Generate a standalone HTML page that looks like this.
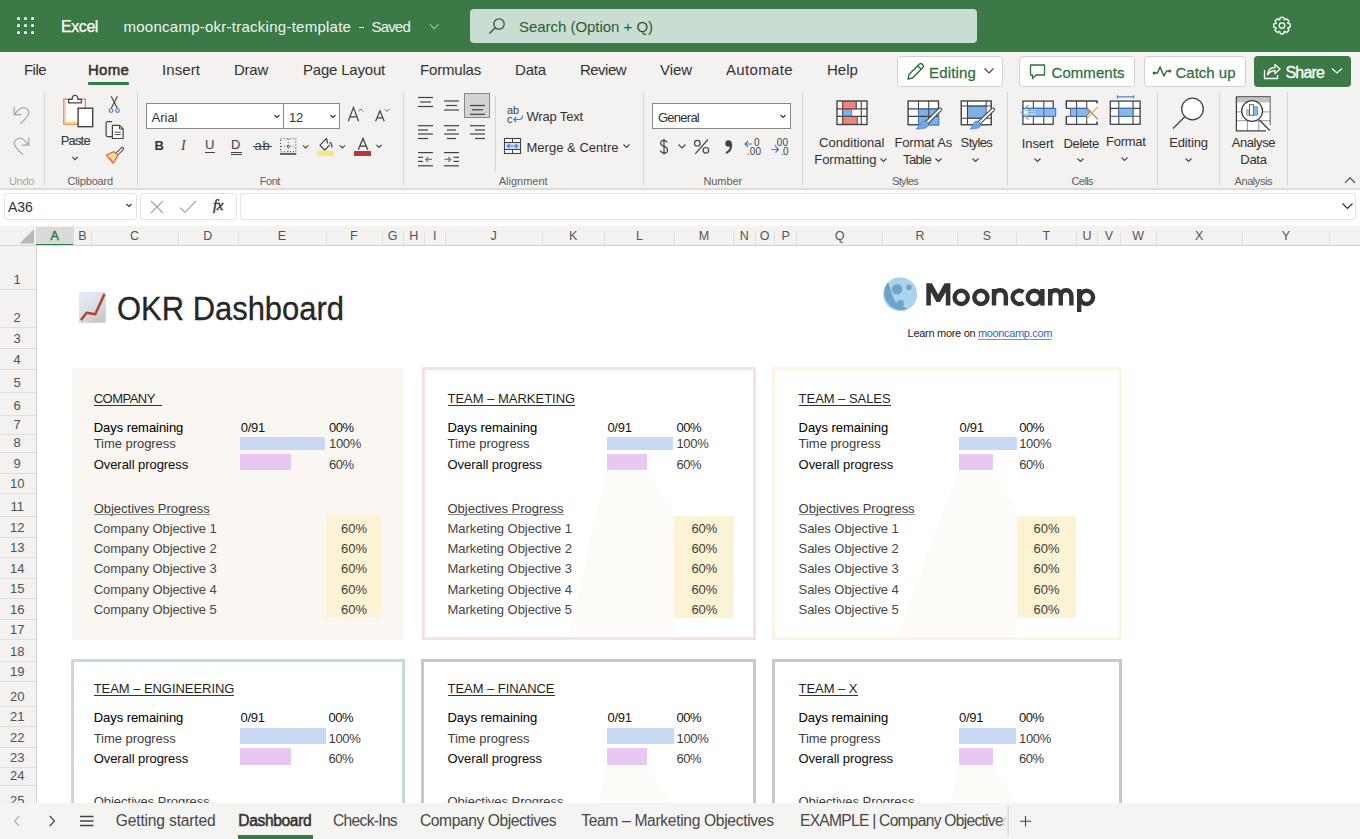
<!DOCTYPE html><html><head><meta charset="utf-8"><style>
html,body{margin:0;padding:0;width:1360px;height:839px;overflow:hidden;background:#fff}
body{position:relative;font-family:"Liberation Sans",sans-serif}
.a{position:absolute}
.t{position:absolute;white-space:pre;line-height:1}
svg{overflow:visible}
</style></head><body>
<div class="a" style="left:0px;top:0px;width:1360px;height:52px;background:#3b7a47"></div>
<div class="a" style="left:17px;top:17px;width:3px;height:3px;border-radius:50%;background:#fff"></div>
<div class="a" style="left:17px;top:24px;width:3px;height:3px;border-radius:50%;background:#fff"></div>
<div class="a" style="left:17px;top:31px;width:3px;height:3px;border-radius:50%;background:#fff"></div>
<div class="a" style="left:24px;top:17px;width:3px;height:3px;border-radius:50%;background:#fff"></div>
<div class="a" style="left:24px;top:24px;width:3px;height:3px;border-radius:50%;background:#fff"></div>
<div class="a" style="left:24px;top:31px;width:3px;height:3px;border-radius:50%;background:#fff"></div>
<div class="a" style="left:31px;top:17px;width:3px;height:3px;border-radius:50%;background:#fff"></div>
<div class="a" style="left:31px;top:24px;width:3px;height:3px;border-radius:50%;background:#fff"></div>
<div class="a" style="left:31px;top:31px;width:3px;height:3px;border-radius:50%;background:#fff"></div>
<div class="t " style="left:61.0px;top:19.4px;font-size:16px;color:#ffffff;letter-spacing:-0.425px;-webkit-text-stroke:0.25px #fff">Excel</div>
<div class="t " style="left:123.5px;top:18.9px;font-size:15px;color:#eef4ef;letter-spacing:0.254px;">mooncamp-okr-tracking-template</div>
<div class="a" style="left:358.7px;top:27px;width:5.3px;height:1.2px;background:#eef4ef"></div>
<div class="t " style="left:371.5px;top:18.9px;font-size:15px;color:#eef4ef;letter-spacing:-0.827px;">Saved</div>
<svg class="a" style="left:429px;top:23px;" width="11" height="8" viewBox="0 0 11 8" fill="none"><path d="M1 1.2 L5 5.8 L9.5 1.2" stroke="#cfe0d3" stroke-width="1"/></svg>
<div class="a" style="left:470px;top:9px;width:507px;height:34px;background:#c9ddd0;border-radius:4px"></div>
<svg class="a" style="left:487px;top:16px;" width="20" height="20" viewBox="0 0 20 20" fill="none"><circle cx="12" cy="8" r="5.2" stroke="#2f5a3a" stroke-width="1.3"/><path d="M8.3 11.7 L2.5 17.5" stroke="#2f5a3a" stroke-width="1.4"/></svg>
<div class="t " style="left:519.0px;top:19.2px;font-size:15px;color:#2f5a3a;letter-spacing:-0.034px;">Search (Option + Q)</div>
<svg class="a" style="left:0;top:0" width="1360" height="839"><path d="M1279.78 19.70 L1280.35 17.47 L1283.65 17.47 L1284.22 19.70 L1284.60 19.86 L1286.59 18.68 L1288.92 21.01 L1287.74 23.00 L1287.90 23.38 L1290.13 23.95 L1290.13 27.25 L1287.90 27.82 L1287.74 28.20 L1288.92 30.19 L1286.59 32.52 L1284.60 31.34 L1284.22 31.50 L1283.65 33.73 L1280.35 33.73 L1279.78 31.50 L1279.40 31.34 L1277.41 32.52 L1275.08 30.19 L1276.26 28.20 L1276.10 27.82 L1273.87 27.25 L1273.87 23.95 L1276.10 23.38 L1276.26 23.00 L1275.08 21.01 L1277.41 18.68 L1279.40 19.86 Z" stroke="#fff" stroke-width="1.3" stroke-linejoin="round" fill="none"/><circle cx="1282" cy="25.6" r="2.8" stroke="#fff" stroke-width="1.3" fill="none"/></svg>
<div class="a" style="left:0px;top:52px;width:1360px;height:137px;background:#f3f2f1"></div>
<div class="t " style="left:24.0px;top:62.2px;font-size:15px;color:#323130;letter-spacing:-0.543px;">File</div>
<div class="t " style="left:88.0px;top:62.2px;font-size:15px;color:#323130;letter-spacing:0.247px;-webkit-text-stroke:0.5px #323130">Home</div>
<div class="t " style="left:162.0px;top:62.2px;font-size:15px;color:#323130;letter-spacing:0.081px;">Insert</div>
<div class="t " style="left:234.0px;top:62.2px;font-size:15px;color:#323130;letter-spacing:-0.251px;">Draw</div>
<div class="t " style="left:303.0px;top:62.2px;font-size:15px;color:#323130;letter-spacing:-0.203px;">Page Layout</div>
<div class="t " style="left:420.0px;top:62.2px;font-size:15px;color:#323130;letter-spacing:-0.189px;">Formulas</div>
<div class="t " style="left:515.0px;top:62.2px;font-size:15px;color:#323130;letter-spacing:-0.171px;">Data</div>
<div class="t " style="left:580.0px;top:62.2px;font-size:15px;color:#323130;letter-spacing:-0.531px;">Review</div>
<div class="t " style="left:660.0px;top:62.2px;font-size:15px;color:#323130;letter-spacing:-0.061px;">View</div>
<div class="t " style="left:726.0px;top:62.2px;font-size:15px;color:#323130;letter-spacing:0.349px;">Automate</div>
<div class="t " style="left:827.0px;top:62.2px;font-size:15px;color:#323130;letter-spacing:0.037px;">Help</div>
<div class="a" style="left:88px;top:82px;width:41px;height:3px;background:#2e7d46;border-radius:1px"></div>
<div class="a" style="left:897px;top:56px;width:106px;height:31px;background:#fff;border:1px solid #d2d0ce;border-radius:4px;box-sizing:border-box"></div>
<svg class="a" style="left:905px;top:62px;" width="20" height="20" viewBox="0 0 20 20" fill="none"><path d="M3 17 L4 12.5 L14.5 2 a1.8 1.8 0 0 1 2.5 0 l.9 .9 a1.8 1.8 0 0 1 0 2.5 L7.5 16 Z M12.8 3.8 L16.2 7.2" stroke="#2e6e3d" stroke-width="1.4" stroke-linejoin="round"/></svg>
<div class="t " style="left:929.0px;top:65.2px;font-size:15px;color:#337242;letter-spacing:0.162px;-webkit-text-stroke:0.3px #337242">Editing</div>
<svg class="a" style="left:983px;top:67px;" width="12" height="8" viewBox="0 0 12 8" fill="none"><path d="M1.5 1.5 L6 6 L10.5 1.5" stroke="#444" stroke-width="1.1"/></svg>
<div class="a" style="left:1019px;top:56px;width:116px;height:31px;background:#fff;border:1px solid #d2d0ce;border-radius:4px;box-sizing:border-box"></div>
<svg class="a" style="left:1029px;top:63px;" width="18" height="18" viewBox="0 0 18 18" fill="none"><path d="M1.5 2 H15.5 V12 H7 L3.5 15.5 V12 H1.5 Z" stroke="#2e6e3d" stroke-width="1.3" stroke-linejoin="round"/></svg>
<div class="t " style="left:1051.5px;top:65.2px;font-size:15px;color:#337242;letter-spacing:0.060px;-webkit-text-stroke:0.3px #337242">Comments</div>
<div class="a" style="left:1144px;top:56px;width:102px;height:31px;background:#fff;border:1px solid #d2d0ce;border-radius:4px;box-sizing:border-box"></div>
<svg class="a" style="left:1152px;top:63px;" width="20" height="16" viewBox="0 0 20 16" fill="none"><path d="M2 10 L5.5 10 L8 4 L12 13 L14.5 8 L18 8" stroke="#2e6e3d" stroke-width="1.5" stroke-linejoin="round" stroke-linecap="round"/><circle cx="2.2" cy="10" r="1.6" fill="#2e6e3d"/><circle cx="17.8" cy="8" r="1.6" fill="#2e6e3d"/></svg>
<div class="t " style="left:1175.5px;top:65.2px;font-size:15px;color:#337242;letter-spacing:-0.005px;-webkit-text-stroke:0.3px #337242">Catch up</div>
<div class="a" style="left:1254px;top:56px;width:97px;height:31px;background:#3b7a47;border-radius:4px"></div>
<svg class="a" style="left:1262px;top:61px;" width="20" height="20" viewBox="0 0 20 20" fill="none"><path d="M2.5 9 V17.5 H15.5 V14" stroke="#fff" stroke-width="1.3"/><path d="M5.5 14 C6 9 9 6.5 13 6.5 V3.5 L18 8 L13 12.5 V9.5 C10 9.5 7.5 11 5.5 14 Z" stroke="#fff" stroke-width="1.3" stroke-linejoin="round"/></svg>
<div class="t " style="left:1285.5px;top:64.9px;font-size:16px;color:#fff;letter-spacing:-0.839px;-webkit-text-stroke:0.3px #fff">Share</div>
<svg class="a" style="left:1331px;top:67px;" width="12" height="8" viewBox="0 0 12 8" fill="none"><path d="M1 1.5 L6 6 L11 1.5" stroke="#fff" stroke-width="1.1"/></svg>
<div class="a" style="left:44px;top:92px;width:1px;height:93px;background:#d6d4d2"></div>
<div class="a" style="left:137px;top:92px;width:1px;height:93px;background:#d6d4d2"></div>
<div class="a" style="left:403px;top:92px;width:1px;height:93px;background:#d6d4d2"></div>
<div class="a" style="left:643px;top:92px;width:1px;height:93px;background:#d6d4d2"></div>
<div class="a" style="left:802px;top:92px;width:1px;height:93px;background:#d6d4d2"></div>
<div class="a" style="left:1007px;top:92px;width:1px;height:93px;background:#d6d4d2"></div>
<div class="a" style="left:1157px;top:92px;width:1px;height:93px;background:#d6d4d2"></div>
<div class="a" style="left:1219px;top:92px;width:1px;height:93px;background:#d6d4d2"></div>
<div class="a" style="left:1287px;top:92px;width:1px;height:93px;background:#d6d4d2"></div>
<div class="a" style="left:495px;top:96px;width:1px;height:75px;background:#d6d4d2"></div>
<div class="a" style="left:0px;top:188px;width:1360px;height:2px;background:#dedcda"></div>
<div class="t " style="left:9.0px;top:175.7px;font-size:11px;color:#a8a6a4;letter-spacing:-0.324px;">Undo</div>
<div class="t " style="left:67.4px;top:175.7px;font-size:11px;color:#605e5c;letter-spacing:-0.165px;">Clipboard</div>
<div class="t " style="left:259.7px;top:175.7px;font-size:11px;color:#605e5c;letter-spacing:-0.428px;">Font</div>
<div class="t " style="left:498.7px;top:175.7px;font-size:11px;color:#605e5c;letter-spacing:0.009px;">Alignment</div>
<div class="t " style="left:703.5px;top:175.7px;font-size:11px;color:#605e5c;letter-spacing:-0.104px;">Number</div>
<div class="t " style="left:892.0px;top:175.7px;font-size:11px;color:#605e5c;letter-spacing:-0.659px;">Styles</div>
<div class="t " style="left:1071.5px;top:175.7px;font-size:11px;color:#605e5c;letter-spacing:-0.590px;">Cells</div>
<div class="t " style="left:1234.6px;top:175.7px;font-size:11px;color:#605e5c;letter-spacing:-0.445px;">Analysis</div>
<svg class="a" style="left:0;top:0" width="1360" height="839"><g stroke="#a8a6a4" stroke-width="1.25" fill="none"><path d="M14.2 106.7 V114.6 H21.3"/><path d="M14.6 114.2 C17.5 110.5 20.5 107.5 23.3 107.5 C26.5 107.5 28.8 110 28.8 113 C28.8 115.5 27 117.5 20.5 123.8"/><path d="M28.8 137.6 V145.1 H21.7"/><path d="M28.4 144.7 C25.5 141 22.8 138 20.2 138 C17 138 14.2 140.5 14.2 143.5 C14.2 146 16 148.5 23 154.7"/></g></svg>
<svg class="a" style="left:0;top:0" width="1360" height="839"><rect x="63.8" y="99.2" width="21.5" height="25" fill="#fff" stroke="#e8806f" stroke-width="1.3"/><path d="M65.6 100.5 V122.6 H84" stroke="#f5d84a" stroke-width="1" fill="none"/><path d="M68.6 102.8 V99.4 H72.2 C72.2 97 73.4 95.4 75 95.4 C76.6 95.4 77.8 97 77.8 99.4 H81.4 V102.8 Z" fill="#fff" stroke="#424242" stroke-width="1.2" stroke-linejoin="round"/><rect x="78.1" y="108.2" width="14.6" height="18.5" fill="#fff" stroke="#424242" stroke-width="1.4"/><path d="M111.2 96.2 L117.6 108.8 M117.4 96.2 L111 108.8" stroke="#424242" stroke-width="1.1"/><circle cx="111" cy="110.6" r="1.8" stroke="#3d7ad6" stroke-width="1.1" fill="#fff"/><circle cx="117.5" cy="110.6" r="1.8" stroke="#3d7ad6" stroke-width="1.1" fill="#fff"/><path d="M112.2 121.6 H107.6 C106.7 121.6 106.1 122.2 106.1 123.1 V135.1 C106.1 136 106.7 136.6 107.6 136.6 H112.2" stroke="#424242" stroke-width="1.2" fill="none"/><path d="M112.4 125.4 H119.5 L123.1 129 V138.5 H112.4 Z" fill="#fff" stroke="#424242" stroke-width="1.2" stroke-linejoin="round"/><path d="M119.5 125.4 V129 H123.1" stroke="#424242" stroke-width="1" fill="none"/><path d="M114.6 132.2 H120.8 M114.6 134.6 H120.8" stroke="#424242" stroke-width="0.9"/><path d="M122.3 148.7 L116.4 154.6" stroke="#424242" stroke-width="3.6" stroke-linecap="round"/><path d="M122.3 148.7 L116.4 154.6" stroke="#fff" stroke-width="1.5" stroke-linecap="round"/><path d="M106.2 155.2 L114 151.6 L117.8 155.6 L113.3 163.3 Z" fill="#fbe38a" stroke="#e0604f" stroke-width="1.2" stroke-linejoin="round"/><path d="M109.5 157.5 L112.5 161" stroke="#e0604f" stroke-width="0.9"/><path d="M72.4 157 L75 159.6 L77.6 157" stroke="#444" stroke-width="1.1" fill="none"/></svg>
<div class="t " style="left:60.7px;top:133.8px;font-size:13px;color:#3b3a39;letter-spacing:-0.829px;-webkit-text-stroke:0.1px #3b3a39">Paste</div>
<div class="a" style="left:146px;top:103px;width:194px;height:26px;background:#fff;border:1px solid #8a8886;box-sizing:border-box"></div>
<div class="a" style="left:283px;top:104px;width:1px;height:24px;background:#8a8886"></div>
<div class="t " style="left:151.5px;top:111.0px;font-size:13px;color:#323130;letter-spacing:-0.002px;">Arial</div>
<svg class="a" style="left:272px;top:113px;" width="10" height="7" viewBox="0 0 10 7" fill="none"><path d="M2.5 2 L5 4.5 L7.5 2" stroke="#333" stroke-width="1.1"/></svg>
<div class="t " style="left:289.0px;top:111.0px;font-size:13px;color:#323130;letter-spacing:-0.230px;">12</div>
<svg class="a" style="left:328px;top:113px;" width="10" height="7" viewBox="0 0 10 7" fill="none"><path d="M2.5 2 L5 4.5 L7.5 2" stroke="#333" stroke-width="1.1"/></svg>
<svg class="a" style="left:0;top:0" width="1360" height="839"><path d="M348.3 121.3 L353.45000000000005 107.4 L358.6 121.3 M349.95 116.85 H356.95" stroke="#424242" stroke-width="1.2" fill="none"/><path d="M358.3 111.5 L360.8 108.9 L363.3 111.5" stroke="#3d7ad6" stroke-width="1" fill="none"/><path d="M375.6 121.3 L379.9 110.8 L384.2 121.3 M376.98 117.94 H382.82" stroke="#424242" stroke-width="1.2" fill="none"/><path d="M384.6 108.9 L387.1 111.5 L389.6 108.9" stroke="#3d7ad6" stroke-width="1" fill="none"/></svg>
<div class="t " style="left:154.5px;top:139.4px;font-size:13px;color:#333;font-weight:bold;letter-spacing:-0.388px;">B</div>
<div class="t" style="left:181px;top:139px;font-size:14px;font-family:'Liberation Serif';font-style:italic;color:#424242">I</div>
<div class="t " style="left:205.0px;top:138.4px;font-size:13px;color:#424242;letter-spacing:0.612px;">U</div>
<div class="a" style="left:205px;top:152px;width:10px;height:1px;background:#424242"></div>
<div class="t " style="left:231.0px;top:138.4px;font-size:13px;color:#424242;letter-spacing:1.112px;">D</div>
<div class="a" style="left:231px;top:151.5px;width:11px;height:1px;background:#424242"></div>
<div class="a" style="left:231px;top:154px;width:11px;height:1px;background:#424242"></div>
<div class="t " style="left:254.5px;top:138.9px;font-size:13px;color:#424242;letter-spacing:0.770px;">ab</div>
<div class="a" style="left:253px;top:146px;width:19px;height:1px;background:#424242"></div>
<svg class="a" style="left:0;top:0" width="1360" height="839"><rect x="280.6" y="138.7" width="15.2" height="13" stroke="#424242" stroke-width="1.1" stroke-dasharray="1.1 1.9" fill="none"/><path d="M288.3 139 V151.5 M281 146.3 H295.5" stroke="#6a6a6a" stroke-width="1" stroke-dasharray="1 1.9"/><circle cx="288.3" cy="146.3" r="1.1" stroke="#424242" stroke-width="0.8" fill="none"/><path d="M280 154 H296.3" stroke="#424242" stroke-width="1.6"/></svg>
<svg class="a" style="left:0;top:0" width="1360" height="839"><path d="M327.6 143.5 L326.5 138.4 L320 145.4 L324.7 150 L329.8 144.9" stroke="#424242" stroke-width="1.2" fill="#fff" stroke-linejoin="round"/><path d="M329.3 142.6 C331.5 142.3 332.3 145 331.6 147.6" stroke="#3d6fc0" stroke-width="1.6" fill="none"/><rect x="317" y="150.8" width="17.2" height="4.9" fill="#f6e97a"/><path d="M303 145.3 L305.7 148 L308.4 145.3" stroke="#444" stroke-width="1.1" fill="none"/><path d="M339.6 145.3 L342.3 148 L345 145.3" stroke="#444" stroke-width="1.1" fill="none"/></svg>
<svg class="a" style="left:0;top:0" width="1360" height="839"><path d="M358.3 149.7 L363.0 138.5 L367.7 149.7 M359.80 146.12 H366.20" stroke="#424242" stroke-width="1.3" fill="none"/></svg>
<div class="a" style="left:354px;top:151px;width:17px;height:4.5px;background:#b23a32"></div>
<svg class="a" style="left:375px;top:142px;" width="10" height="7" viewBox="0 0 10 7" fill="none"><path d="M1.5 3 L4 5.5 L6.5 3" stroke="#444" stroke-width="1.1"/></svg>
<svg class="a" style="left:416px;top:94px;" width="20" height="16" viewBox="0 0 20 16" fill="none"><path d="M2 3.5 H17" stroke="#424242" stroke-width="1.2"/><path d="M4 8 H15" stroke="#424242" stroke-width="1.2"/><path d="M2 12.5 H17" stroke="#424242" stroke-width="1.2"/></svg>
<svg class="a" style="left:442px;top:97px;" width="20" height="16" viewBox="0 0 20 16" fill="none"><path d="M2 4 H17" stroke="#424242" stroke-width="1.2"/><path d="M4 8.5 H15" stroke="#424242" stroke-width="1.2"/><path d="M2 13 H17" stroke="#424242" stroke-width="1.2"/></svg>
<div class="a" style="left:464px;top:93px;width:26px;height:25px;background:#d5d3d1;border:1px solid #8a8886;box-sizing:border-box"></div>
<svg class="a" style="left:467px;top:100px;" width="20" height="18" viewBox="0 0 20 18" fill="none"><path d="M3 5.5 H18" stroke="#424242" stroke-width="1.2"/><path d="M5 9.8 H16" stroke="#424242" stroke-width="1.2"/><path d="M3 14.3 H18" stroke="#424242" stroke-width="1.2"/></svg>
<svg class="a" style="left:416px;top:122px;" width="20" height="20" viewBox="0 0 20 20" fill="none"><path d="M2 3.7 H17" stroke="#424242" stroke-width="1.2"/><path d="M2 8 H12" stroke="#424242" stroke-width="1.2"/><path d="M2 12 H17" stroke="#424242" stroke-width="1.2"/><path d="M2 16.5 H12" stroke="#424242" stroke-width="1.2"/></svg>
<svg class="a" style="left:442px;top:122px;" width="20" height="20" viewBox="0 0 20 20" fill="none"><path d="M2 3.7 H17" stroke="#424242" stroke-width="1.2"/><path d="M5 8 H14" stroke="#424242" stroke-width="1.2"/><path d="M2 12 H17" stroke="#424242" stroke-width="1.2"/><path d="M5 16.5 H14" stroke="#424242" stroke-width="1.2"/></svg>
<svg class="a" style="left:467px;top:122px;" width="20" height="20" viewBox="0 0 20 20" fill="none"><path d="M3 3.7 H18" stroke="#424242" stroke-width="1.2"/><path d="M8 8 H18" stroke="#424242" stroke-width="1.2"/><path d="M3 12 H18" stroke="#424242" stroke-width="1.2"/><path d="M8 16.5 H18" stroke="#424242" stroke-width="1.2"/></svg>
<svg class="a" style="left:416px;top:150px;" width="20" height="18" viewBox="0 0 20 18" fill="none"><path d="M2 2.6 H17" stroke="#424242" stroke-width="1.2"/><path d="M2 7.3 H7" stroke="#424242" stroke-width="1.2"/><path d="M2 11.4 H7" stroke="#424242" stroke-width="1.2"/><path d="M2 15.8 H17" stroke="#424242" stroke-width="1.2"/><path d="M9.8 9.4 H16 M12.2 7 L9.8 9.4 L12.2 11.8" stroke="#4a86cf" stroke-width="1.3" fill="none"/></svg>
<svg class="a" style="left:442px;top:150px;" width="20" height="18" viewBox="0 0 20 18" fill="none"><path d="M2 2.6 H17" stroke="#424242" stroke-width="1.2"/><path d="M11.5 7.3 H17" stroke="#424242" stroke-width="1.2"/><path d="M11.5 11.4 H17" stroke="#424242" stroke-width="1.2"/><path d="M2 15.8 H17" stroke="#424242" stroke-width="1.2"/><path d="M2.5 9.4 H8.7 M6.3 7 L8.7 9.4 L6.3 11.8" stroke="#4a86cf" stroke-width="1.3" fill="none"/></svg>
<div class="t" style="left:507px;top:106px;font-size:11px;line-height:9px;color:#424242">ab<br>c</div>
<svg class="a" style="left:512px;top:114px;" width="12" height="10" viewBox="0 0 12 10" fill="none"><path d="M2 5.5 H7 C9.5 5.5 10.5 4 10.5 1.5" stroke="#3d7ad6" stroke-width="1.2" fill="none"/><path d="M4.2 3 L1.8 5.5 L4.2 8" stroke="#3d7ad6" stroke-width="1.2" fill="none"/></svg>
<div class="t " style="left:526.5px;top:110.0px;font-size:13px;color:#323130;letter-spacing:-0.172px;">Wrap Text</div>
<svg class="a" style="left:503px;top:137px;" width="19" height="18" viewBox="0 0 19 18" fill="none"><rect x="1.5" y="1.5" width="16" height="15" stroke="#424242" stroke-width="1.1" fill="#fff"/><rect x="2" y="5.5" width="15" height="7" fill="#cfe0f5"/><path d="M1.5 5.5 H17.5 M1.5 12.5 H17.5 M9.5 1.5 V5.5 M9.5 12.5 V16.5" stroke="#424242" stroke-width="1"/><path d="M4.5 9 H14.5 M6.5 7 L4.5 9 L6.5 11 M12.5 7 L14.5 9 L12.5 11" stroke="#3d7ad6" stroke-width="1.1" fill="none"/></svg>
<div class="t " style="left:526.5px;top:140.9px;font-size:13px;color:#323130;letter-spacing:0.017px;">Merge &amp; Centre</div>
<svg class="a" style="left:622px;top:143px;" width="9" height="6" viewBox="0 0 9 6" fill="none"><path d="M1.5 1.5 L4.5 4.5 L7.5 1.5" stroke="#444" stroke-width="1.1"/></svg>
<div class="a" style="left:652px;top:103px;width:139px;height:26px;background:#fff;border:1px solid #8a8886;box-sizing:border-box"></div>
<div class="t " style="left:658.0px;top:111.0px;font-size:13px;color:#323130;letter-spacing:-0.750px;">General</div>
<svg class="a" style="left:778px;top:113px;" width="10" height="7" viewBox="0 0 10 7" fill="none"><path d="M2.5 2 L5 4.5 L7.5 2" stroke="#333" stroke-width="1.1"/></svg>
<svg class="a" style="left:0;top:0" width="1360" height="839"><path d="M667.3 142.6 C666.6 141 665.4 140.3 663.9 140.3 C661.9 140.3 660.7 141.5 660.7 143.2 C660.7 147.2 667.6 145.6 667.6 150 C667.6 151.8 666.2 153.1 664 153.1 C662.3 153.1 661 152.2 660.3 150.6 M664 138.8 V154.8" stroke="#424242" stroke-width="1.2" fill="none"/><circle cx="697.3" cy="143.2" r="2.8" stroke="#424242" stroke-width="1.2" fill="none"/><circle cx="705.9" cy="150.3" r="2.8" stroke="#424242" stroke-width="1.2" fill="none"/><path d="M708 139.5 L695.2 153.8" stroke="#424242" stroke-width="1.2"/></svg>
<svg class="a" style="left:677px;top:143px;" width="10" height="7" viewBox="0 0 10 7" fill="none"><path d="M1.5 1.5 L5 5 L8.5 1.5" stroke="#444" stroke-width="1.1"/></svg>
<svg class="a" style="left:722px;top:138px;" width="12" height="17" viewBox="0 0 12 17" fill="none"><circle cx="6.5" cy="5.5" r="3.2" fill="#424242"/><path d="M9 6 C9.5 10 7.5 13.5 4 15" stroke="#424242" stroke-width="2.2" fill="none"/></svg>
<svg class="a" style="left:743px;top:137px;" width="20" height="19" viewBox="0 0 20 19" fill="none"><path d="M2 7 H9 M5 4 L2 7 L5 10" stroke="#3d7ad6" stroke-width="1.2" fill="none"/></svg>
<div class="t " style="left:754.0px;top:137.5px;font-size:10px;color:#424242;letter-spacing:0.438px;">0</div>
<div class="t " style="left:747.0px;top:146.5px;font-size:10px;color:#424242;letter-spacing:0.033px;">.00</div>
<svg class="a" style="left:770px;top:137px;" width="20" height="19" viewBox="0 0 20 19" fill="none"><path d="M1.5 12.5 H8.5 M5.5 9.5 L8.5 12.5 L5.5 15.5" stroke="#3d7ad6" stroke-width="1.2" fill="none"/></svg>
<div class="t " style="left:774.0px;top:137.5px;font-size:10px;color:#424242;letter-spacing:0.033px;">.00</div>
<div class="t " style="left:781.0px;top:146.5px;font-size:10px;color:#424242;letter-spacing:-0.670px;">.0</div>
<svg class="a" style="left:834px;top:99px;" width="36" height="30" viewBox="0 0 36 30" fill="none"><rect x="3" y="2" width="30" height="23.5" fill="#fff"/>
<rect x="8.5" y="2" width="13.75" height="7.9" fill="#e8877c"/>
<rect x="8.5" y="17.4" width="15" height="8.1" fill="#e8877c"/>
<rect x="8.5" y="9.9" width="9.4" height="7.5" fill="#7fb0e8"/>
<path d="M3 9.9 H33 M3 17.4 H33 M8.5 2 V25.5 M27.25 2 V25.5 M22.25 2 V9.9" stroke="#424242" stroke-width="1.1"/>
<path d="M8.8 2.3 V9.6 H22" stroke="#c0413a" stroke-width="1.1" fill="none"/><path d="M8.8 17.7 V25.2 M23.3 17.7 V25.2" stroke="#c0413a" stroke-width="1.1" fill="none"/>
<path d="M9 10.4 H17.6 V16.9 H9 Z" stroke="#4a86cf" stroke-width="0.9" fill="none"/>
<rect x="3" y="2" width="30" height="23.5" fill="none" stroke="#424242" stroke-width="1.4"/></svg>
<svg class="a" style="left:905px;top:99px;" width="40" height="34" viewBox="0 0 40 34" fill="none"><rect x="3.1" y="2" width="30.4" height="23.75" fill="#fff" stroke="#424242" stroke-width="1.4"/>
<rect x="13.5" y="9.9" width="20" height="15.85" fill="#7fb0e8"/>
<path d="M3.1 9.9 H33.5 M3.1 17.4 H33.5 M13.5 2 V25.75 M23.75 2 V25.75" stroke="#424242" stroke-width="1.1"/>
<path d="M13.5 9.9 H33.5 V25.75 H13.5 Z" stroke="#4a86cf" stroke-width="0.8" fill="none"/><path d="M35 10.5 L21 24.5" stroke="#424242" stroke-width="4" stroke-linecap="round"/><path d="M35 10.5 L21 24.5" stroke="#fff" stroke-width="1.9" stroke-linecap="round"/><path d="M22.5 23.5 C24 25.5 23.5 28.0 20.5 29.0 C18 29.8 13 30 11 30 C13 28.5 16 23.5 17.5 22.5 C19 21.5 21 22.0 22.5 23.5 Z" fill="#6ea6e6" stroke="#3d6fb0" stroke-width="0.6"/></svg>
<svg class="a" style="left:959px;top:99px;" width="40" height="34" viewBox="0 0 40 34" fill="none"><rect x="2.25" y="2" width="30" height="23.75" fill="#fff" stroke="#424242" stroke-width="1.4"/>
<rect x="8.5" y="7" width="18.75" height="12.25" fill="#7fb0e8" stroke="#3d6fb0" stroke-width="1"/>
<path d="M2.25 7 H32.25 M2.25 19.25 H32.25 M8.5 2 V25.75 M27.25 2 V7" stroke="#424242" stroke-width="1.1"/><path d="M34 10.5 L19.5 24.5" stroke="#424242" stroke-width="4" stroke-linecap="round"/><path d="M34 10.5 L19.5 24.5" stroke="#fff" stroke-width="1.9" stroke-linecap="round"/><path d="M21.0 23.5 C22.5 25.5 22.0 28.0 19.0 29.0 C16.5 29.8 13 30 11 30 C13 28.5 14.5 23.5 16.0 22.5 C17.5 21.5 19.5 22.0 21.0 23.5 Z" fill="#6ea6e6" stroke="#3d6fb0" stroke-width="0.6"/></svg>
<div class="t " style="left:819.0px;top:135.6px;font-size:13px;color:#323130;letter-spacing:0.032px;">Conditional</div>
<div class="t " style="left:814.2px;top:152.6px;font-size:13px;color:#323130;letter-spacing:0.007px;">Formatting</div>
<svg class="a" style="left:879px;top:157px;" width="9" height="6" viewBox="0 0 9 6" fill="none"><path d="M1.5 1.5 L4.5 4.5 L7.5 1.5" stroke="#444" stroke-width="1.1"/></svg>
<div class="t " style="left:894.5px;top:135.6px;font-size:13px;color:#323130;letter-spacing:-0.193px;">Format As</div>
<div class="t " style="left:903.0px;top:152.6px;font-size:13px;color:#323130;letter-spacing:-0.616px;">Table</div>
<svg class="a" style="left:934px;top:157px;" width="9" height="6" viewBox="0 0 9 6" fill="none"><path d="M1.5 1.5 L4.5 4.5 L7.5 1.5" stroke="#444" stroke-width="1.1"/></svg>
<div class="t " style="left:960.6px;top:135.6px;font-size:13px;color:#323130;letter-spacing:-0.634px;">Styles</div>
<svg class="a" style="left:971px;top:157px;" width="9" height="6" viewBox="0 0 9 6" fill="none"><path d="M1.5 1.5 L4.5 4.5 L7.5 1.5" stroke="#444" stroke-width="1.1"/></svg>
<svg class="a" style="left:1019px;top:98px;" width="40" height="30" viewBox="0 0 40 30" fill="none"><rect x="3.9" y="3.1" width="30.3" height="23.2" fill="#fff" stroke="#424242" stroke-width="1.3"/>
<path d="M3.9 10.4 H34.2 M3.9 18.3 H34.2 M14.4 3.1 V26.3 M24.8 3.1 V26.3" stroke="#424242" stroke-width="1.1"/>
<rect x="9.9" y="10.4" width="26.8" height="7.9" fill="#8bb8ea" stroke="#3d6fb0" stroke-width="1"/>
<path d="M24.8 10.4 V18.3" stroke="#3d6fb0" stroke-width="1"/>
<path d="M17 12.6 H6.5 M17 16.1 H6.5" stroke="#eef5fd" stroke-width="1.6"/>
<path d="M9.5 7 L2.3 14.3 L9.5 21.5" stroke="#6ea6e6" stroke-width="1.4" fill="none"/>
<path d="M17.5 12.6 H6 M17.5 16.1 H6" stroke="#6ea6e6" stroke-width="0.9"/></svg>
<svg class="a" style="left:1064px;top:98px;" width="40" height="30" viewBox="0 0 40 30" fill="none"><path d="M2.4 10.4 V3.1 H32.9 V5 M2.4 18.3 V26.3 H32.9 V24" stroke="#424242" stroke-width="1.3" fill="#fff"/>
<rect x="2.4" y="3.1" width="30.5" height="7.3" fill="#fff"/><rect x="2.4" y="18.3" width="30.5" height="8" fill="#fff"/>
<path d="M2.4 10.4 V3.1 H32.9 V5.5 M2.4 18.3 V26.3 H32.9 V23.5" stroke="#424242" stroke-width="1.3" fill="none"/>
<path d="M2.4 10.4 H22.7 M2.4 18.3 H22.7 M12.6 3.1 V26.3 M22.7 3.1 V10.4 M22.7 18.3 V26.3" stroke="#424242" stroke-width="1.1"/>
<path d="M6.6 10.4 H22 L25.6 14.35 L22 18.3 H6.6 Z" fill="#8bb8ea" stroke="#3d6fb0" stroke-width="1"/>
<path d="M12.6 10.4 V18.3" stroke="#3d6fb0" stroke-width="1"/>
<path d="M22 8.9 L33.9 21.3" stroke="#e0604f" stroke-width="1.1"/><path d="M33.9 8.9 L22 21.3" stroke="#d9b040" stroke-width="1.1"/></svg>
<svg class="a" style="left:1108px;top:94px;" width="36" height="34" viewBox="0 0 36 34" fill="none"><path d="M9.3 2.8 H25.7 M9.3 1.2 V4.4 M25.7 1.2 V4.4" stroke="#4a86cf" stroke-width="1.2"/>
<rect x="2.3" y="7.1" width="29.8" height="23.2" fill="#fff" stroke="#424242" stroke-width="1.3"/>
<path d="M2.3 14.4 H32.1 M2.3 22.3 H32.1 M10.8 7.1 V30.3 M25 7.1 V30.3" stroke="#424242" stroke-width="1.1"/>
<rect x="10.8" y="14.4" width="14.2" height="7.9" fill="#8bb8ea" stroke="#3d6fb0" stroke-width="1"/></svg>
<div class="t " style="left:1021.8px;top:136.5px;font-size:13px;color:#323130;letter-spacing:-0.119px;">Insert</div>
<svg class="a" style="left:1033px;top:157px;" width="9" height="6" viewBox="0 0 9 6" fill="none"><path d="M1.5 1.5 L4.5 4.5 L7.5 1.5" stroke="#444" stroke-width="1.1"/></svg>
<div class="t " style="left:1063.5px;top:136.5px;font-size:13px;color:#323130;letter-spacing:-0.347px;">Delete</div>
<svg class="a" style="left:1076px;top:157px;" width="9" height="6" viewBox="0 0 9 6" fill="none"><path d="M1.5 1.5 L4.5 4.5 L7.5 1.5" stroke="#444" stroke-width="1.1"/></svg>
<div class="t " style="left:1106.0px;top:135.1px;font-size:13px;color:#323130;letter-spacing:-0.262px;">Format</div>
<svg class="a" style="left:1120px;top:156px;" width="9" height="6" viewBox="0 0 9 6" fill="none"><path d="M1.5 1.5 L4.5 4.5 L7.5 1.5" stroke="#444" stroke-width="1.1"/></svg>
<svg class="a" style="left:1170px;top:95px;" width="38" height="36" viewBox="0 0 38 36" fill="none"><circle cx="22.5" cy="14" r="10.8" stroke="#424242" stroke-width="1.3" fill="#fff"/><path d="M15 21.5 L3 33.5" stroke="#424242" stroke-width="1.3"/></svg>
<div class="t " style="left:1169.3px;top:135.6px;font-size:13px;color:#323130;letter-spacing:-0.164px;">Editing</div>
<svg class="a" style="left:1184px;top:157px;" width="9" height="6" viewBox="0 0 9 6" fill="none"><path d="M1.5 1.5 L4.5 4.5 L7.5 1.5" stroke="#444" stroke-width="1.1"/></svg>
<svg class="a" style="left:1233px;top:94px;" width="42" height="42" viewBox="0 0 42 42" fill="none"><rect x="3.4" y="2.6" width="33.8" height="34.3" fill="#fff"/>
<rect x="4" y="3.2" width="32.6" height="5.3" fill="#c4c2c0"/>
<path d="M3.4 17.9 H37.2 M3.4 26.7 H37.2 M14.4 26.7 V36.9 M25.8 26.7 V36.9" stroke="#9a9896" stroke-width="1"/>
<path d="M3.4 2.6 V36.9 H33" stroke="#424242" stroke-width="1.3" fill="none"/><path d="M3.4 2.6 H37.2 V31" stroke="#6a6866" stroke-width="1.1" fill="none"/>
<circle cx="19.1" cy="17" r="10.4" fill="#fff" stroke="#424242" stroke-width="1.3"/>
<path d="M26.3 25.9 L36.8 36.5" stroke="#424242" stroke-width="1.4"/>
<rect x="13.6" y="15.8" width="2.9" height="5.4" fill="#c8c6c4" stroke="#8a8886" stroke-width="0.6"/>
<rect x="16.5" y="10.7" width="4.1" height="10.5" fill="#fff" stroke="#424242" stroke-width="0.8"/>
<rect x="20.6" y="12.8" width="3.9" height="8.4" fill="#8bb8ea" stroke="#3d7ad6" stroke-width="0.7"/></svg>
<div class="t " style="left:1231.8px;top:135.6px;font-size:13px;color:#323130;letter-spacing:-0.436px;">Analyse</div>
<div class="t " style="left:1240.3px;top:152.6px;font-size:13px;color:#323130;letter-spacing:-0.290px;">Data</div>
<svg class="a" style="left:1343px;top:176px;" width="14" height="9" viewBox="0 0 14 9" fill="none"><path d="M2 6.8 L7 1.8 L12 6.8" stroke="#444" stroke-width="1.1" fill="none"/></svg>
<div class="a" style="left:5px;top:194px;width:131px;height:25px;background:#fff;border-radius:2px;box-shadow:0 0 0 1px #e6e4e2"></div>
<div class="t " style="left:8.0px;top:200.1px;font-size:14px;color:#323130;letter-spacing:-0.070px;">A36</div>
<svg class="a" style="left:124px;top:202px;" width="10" height="7" viewBox="0 0 10 7" fill="none"><path d="M2.5 2 L5 4.5 L7.5 2" stroke="#333" stroke-width="1.1"/></svg>
<div class="a" style="left:141px;top:194px;width:95px;height:25px;background:#fff;border-radius:2px;box-shadow:0 0 0 1px #e6e4e2"></div>
<svg class="a" style="left:148px;top:198px;" width="18" height="18" viewBox="0 0 18 18" fill="none"><path d="M3 3 L15 15 M15 3 L3 15" stroke="#a8a6a4" stroke-width="1.1"/></svg>
<svg class="a" style="left:178px;top:198px;" width="20" height="18" viewBox="0 0 20 18" fill="none"><path d="M2 9.5 L7 14.5 L18 3" stroke="#a8a6a4" stroke-width="1.1" fill="none"/></svg>
<div class="t" style="left:213px;top:198px;font-size:15px;font-family:'Liberation Serif';font-style:italic;color:#333;letter-spacing:-0.3px;-webkit-text-stroke:0.4px #333">fx</div>
<div class="a" style="left:241px;top:194px;width:1114px;height:24.5px;background:#fff;border-radius:2px;box-shadow:0 0 0 1px #e6e4e2"></div>
<svg class="a" style="left:1341px;top:202px;" width="14" height="10" viewBox="0 0 14 10" fill="none"><path d="M1.5 1.5 L6.5 6.5 L11.5 1.5" stroke="#333" stroke-width="1.2" fill="none"/></svg>
<div class="a" style="left:0px;top:226px;width:1360px;height:20px;background:#f3f2f1"></div>
<div class="a" style="left:0px;top:245px;width:1360px;height:1px;background:#d4d2d0"></div>
<svg class="a" style="left:18px;top:228px;" width="17" height="17" viewBox="0 0 17 17" fill="none"><path d="M16 1 V15.5 H1.5 Z" fill="#b9b8b6"/></svg>
<div class="a" style="left:36px;top:227px;width:37.5px;height:18px;background:#dcdad8"></div>
<div class="a" style="left:36px;top:243.5px;width:37.5px;height:1.8px;background:#2e7d46"></div>
<div class="t " style="left:50.4px;top:229.9px;font-size:12.5px;color:#2e7d46;-webkit-text-stroke:0.5px #2e7d46">A</div>
<div class="a" style="left:73.0px;top:232px;width:1px;height:13px;background:#e1dfdd"></div>
<div class="t " style="left:78.2px;top:229.9px;font-size:12.5px;color:#555;">B</div>
<div class="a" style="left:91.0px;top:232px;width:1px;height:13px;background:#e1dfdd"></div>
<div class="t " style="left:130.1px;top:229.9px;font-size:12.5px;color:#555;">C</div>
<div class="a" style="left:177.5px;top:232px;width:1px;height:13px;background:#e1dfdd"></div>
<div class="t " style="left:203.3px;top:229.9px;font-size:12.5px;color:#555;">D</div>
<div class="a" style="left:237.5px;top:232px;width:1px;height:13px;background:#e1dfdd"></div>
<div class="t " style="left:277.7px;top:229.9px;font-size:12.5px;color:#555;">E</div>
<div class="a" style="left:325.5px;top:232px;width:1px;height:13px;background:#e1dfdd"></div>
<div class="t " style="left:350.0px;top:229.9px;font-size:12.5px;color:#555;">F</div>
<div class="a" style="left:381.5px;top:232px;width:1px;height:13px;background:#e1dfdd"></div>
<div class="t " style="left:387.8px;top:229.9px;font-size:12.5px;color:#555;">G</div>
<div class="a" style="left:403.2px;top:232px;width:1px;height:13px;background:#e1dfdd"></div>
<div class="t " style="left:409.2px;top:229.9px;font-size:12.5px;color:#555;">H</div>
<div class="a" style="left:423.5px;top:232px;width:1px;height:13px;background:#e1dfdd"></div>
<div class="t " style="left:432.9px;top:229.9px;font-size:12.5px;color:#555;">I</div>
<div class="a" style="left:444.9px;top:232px;width:1px;height:13px;background:#e1dfdd"></div>
<div class="t " style="left:490.6px;top:229.9px;font-size:12.5px;color:#555;">J</div>
<div class="a" style="left:541.9px;top:232px;width:1px;height:13px;background:#e1dfdd"></div>
<div class="t " style="left:569.1px;top:229.9px;font-size:12.5px;color:#555;">K</div>
<div class="a" style="left:604.0px;top:232px;width:1px;height:13px;background:#e1dfdd"></div>
<div class="t " style="left:636.0px;top:229.9px;font-size:12.5px;color:#555;">L</div>
<div class="a" style="left:674.2px;top:232px;width:1px;height:13px;background:#e1dfdd"></div>
<div class="t " style="left:698.8px;top:229.9px;font-size:12.5px;color:#555;">M</div>
<div class="a" style="left:733.3px;top:232px;width:1px;height:13px;background:#e1dfdd"></div>
<div class="t " style="left:739.7px;top:229.9px;font-size:12.5px;color:#555;">N</div>
<div class="a" style="left:754.5px;top:232px;width:1px;height:13px;background:#e1dfdd"></div>
<div class="t " style="left:759.8px;top:229.9px;font-size:12.5px;color:#555;">O</div>
<div class="a" style="left:774.3px;top:232px;width:1px;height:13px;background:#e1dfdd"></div>
<div class="t " style="left:781.5px;top:229.9px;font-size:12.5px;color:#555;">P</div>
<div class="a" style="left:796.3px;top:232px;width:1px;height:13px;background:#e1dfdd"></div>
<div class="t " style="left:834.7px;top:229.9px;font-size:12.5px;color:#555;">Q</div>
<div class="a" style="left:882.2px;top:232px;width:1px;height:13px;background:#e1dfdd"></div>
<div class="t " style="left:915.4px;top:229.9px;font-size:12.5px;color:#555;">R</div>
<div class="a" style="left:957.0px;top:232px;width:1px;height:13px;background:#e1dfdd"></div>
<div class="t " style="left:982.8px;top:229.9px;font-size:12.5px;color:#555;">S</div>
<div class="a" style="left:1016.2px;top:232px;width:1px;height:13px;background:#e1dfdd"></div>
<div class="t " style="left:1042.6px;top:229.9px;font-size:12.5px;color:#555;">T</div>
<div class="a" style="left:1076.0px;top:232px;width:1px;height:13px;background:#e1dfdd"></div>
<div class="t " style="left:1082.4px;top:229.9px;font-size:12.5px;color:#555;">U</div>
<div class="a" style="left:1097.1px;top:232px;width:1px;height:13px;background:#e1dfdd"></div>
<div class="t " style="left:1104.8px;top:229.9px;font-size:12.5px;color:#555;">V</div>
<div class="a" style="left:1120.1px;top:232px;width:1px;height:13px;background:#e1dfdd"></div>
<div class="t " style="left:1132.2px;top:229.9px;font-size:12.5px;color:#555;">W</div>
<div class="a" style="left:1155.5px;top:232px;width:1px;height:13px;background:#e1dfdd"></div>
<div class="t " style="left:1194.9px;top:229.9px;font-size:12.5px;color:#555;">X</div>
<div class="a" style="left:1241.9px;top:232px;width:1px;height:13px;background:#e1dfdd"></div>
<div class="t " style="left:1281.7px;top:229.9px;font-size:12.5px;color:#555;">Y</div>
<div class="a" style="left:1329.2px;top:232px;width:1px;height:13px;background:#e1dfdd"></div>
<div class="t " style="left:1370.9px;top:229.9px;font-size:12.5px;color:#555;">Z</div>
<div class="a" style="left:0px;top:246px;width:36px;height:557px;background:#f3f2f1"></div>
<div class="a" style="left:35.5px;top:246px;width:1px;height:557px;background:#d4d2d0"></div>
<div class="a" style="left:0px;top:288.5px;width:36px;height:1px;background:#e1dfdd"></div>
<div class="t " style="left:13.6px;top:273.1px;font-size:13px;color:#505050;">1</div>
<div class="a" style="left:0px;top:326.5px;width:36px;height:1px;background:#e1dfdd"></div>
<div class="t " style="left:13.6px;top:311.1px;font-size:13px;color:#505050;">2</div>
<div class="a" style="left:0px;top:347.5px;width:36px;height:1px;background:#e1dfdd"></div>
<div class="t " style="left:13.6px;top:332.1px;font-size:13px;color:#505050;">3</div>
<div class="a" style="left:0px;top:368.5px;width:36px;height:1px;background:#e1dfdd"></div>
<div class="t " style="left:13.6px;top:353.1px;font-size:13px;color:#505050;">4</div>
<div class="a" style="left:0px;top:391.5px;width:36px;height:1px;background:#e1dfdd"></div>
<div class="t " style="left:13.6px;top:376.1px;font-size:13px;color:#505050;">5</div>
<div class="a" style="left:0px;top:414.5px;width:36px;height:1px;background:#e1dfdd"></div>
<div class="t " style="left:13.6px;top:399.1px;font-size:13px;color:#505050;">6</div>
<div class="a" style="left:0px;top:433.5px;width:36px;height:1px;background:#e1dfdd"></div>
<div class="t " style="left:13.6px;top:418.1px;font-size:13px;color:#505050;">7</div>
<div class="a" style="left:0px;top:451.5px;width:36px;height:1px;background:#e1dfdd"></div>
<div class="t " style="left:13.6px;top:436.1px;font-size:13px;color:#505050;">8</div>
<div class="a" style="left:0px;top:472.5px;width:36px;height:1px;background:#e1dfdd"></div>
<div class="t " style="left:13.6px;top:457.1px;font-size:13px;color:#505050;">9</div>
<div class="a" style="left:0px;top:492.5px;width:36px;height:1px;background:#e1dfdd"></div>
<div class="t " style="left:10.0px;top:477.1px;font-size:13px;color:#505050;">10</div>
<div class="a" style="left:0px;top:515.5px;width:36px;height:1px;background:#e1dfdd"></div>
<div class="t " style="left:10.5px;top:500.1px;font-size:13px;color:#505050;">11</div>
<div class="a" style="left:0px;top:536.5px;width:36px;height:1px;background:#e1dfdd"></div>
<div class="t " style="left:10.0px;top:521.2px;font-size:13px;color:#505050;">12</div>
<div class="a" style="left:0px;top:556.5px;width:36px;height:1px;background:#e1dfdd"></div>
<div class="t " style="left:10.0px;top:541.2px;font-size:13px;color:#505050;">13</div>
<div class="a" style="left:0px;top:577.5px;width:36px;height:1px;background:#e1dfdd"></div>
<div class="t " style="left:10.0px;top:562.2px;font-size:13px;color:#505050;">14</div>
<div class="a" style="left:0px;top:597.5px;width:36px;height:1px;background:#e1dfdd"></div>
<div class="t " style="left:10.0px;top:582.2px;font-size:13px;color:#505050;">15</div>
<div class="a" style="left:0px;top:618.5px;width:36px;height:1px;background:#e1dfdd"></div>
<div class="t " style="left:10.0px;top:603.2px;font-size:13px;color:#505050;">16</div>
<div class="a" style="left:0px;top:638.5px;width:36px;height:1px;background:#e1dfdd"></div>
<div class="t " style="left:10.0px;top:623.2px;font-size:13px;color:#505050;">17</div>
<div class="a" style="left:0px;top:660.5px;width:36px;height:1px;background:#e1dfdd"></div>
<div class="t " style="left:10.0px;top:645.2px;font-size:13px;color:#505050;">18</div>
<div class="a" style="left:0px;top:680.5px;width:36px;height:1px;background:#e1dfdd"></div>
<div class="t " style="left:10.0px;top:665.2px;font-size:13px;color:#505050;">19</div>
<div class="a" style="left:0px;top:705.5px;width:36px;height:1px;background:#e1dfdd"></div>
<div class="t " style="left:10.0px;top:690.2px;font-size:13px;color:#505050;">20</div>
<div class="a" style="left:0px;top:725.5px;width:36px;height:1px;background:#e1dfdd"></div>
<div class="t " style="left:10.0px;top:710.2px;font-size:13px;color:#505050;">21</div>
<div class="a" style="left:0px;top:746.5px;width:36px;height:1px;background:#e1dfdd"></div>
<div class="t " style="left:10.0px;top:731.2px;font-size:13px;color:#505050;">22</div>
<div class="a" style="left:0px;top:766.5px;width:36px;height:1px;background:#e1dfdd"></div>
<div class="t " style="left:10.0px;top:751.2px;font-size:13px;color:#505050;">23</div>
<div class="a" style="left:0px;top:784.5px;width:36px;height:1px;background:#e1dfdd"></div>
<div class="t " style="left:10.0px;top:769.2px;font-size:13px;color:#505050;">24</div>
<div class="a" style="left:0px;top:809.5px;width:36px;height:1px;background:#e1dfdd"></div>
<div class="t " style="left:10.0px;top:794.2px;font-size:13px;color:#505050;">25</div>
<div class="a" style="left:36.5px;top:246px;width:1323.5px;height:557px;background:#fff"></div>
<svg class="a" style="left:79px;top:292px;" width="28" height="32" viewBox="0 0 28 32" fill="none"><defs><linearGradient id="eg" x1="0" y1="0" x2="0.6" y2="1"><stop offset="0" stop-color="#e6edf5"/><stop offset="0.5" stop-color="#dde2e6"/><stop offset="1" stop-color="#c9caca"/></linearGradient></defs>
<rect x="0" y="0" width="26.8" height="30.8" fill="url(#eg)"/>
<path d="M2 28 L7.7 20.7 L16.3 22.2 L25.4 2.1" stroke="#5a2a22" stroke-width="2.6" fill="none" stroke-linejoin="round" opacity="0.55"/>
<path d="M2 28 L7.7 20.7 L16.3 22.2 L25.4 2.1" stroke="#c43b2a" stroke-width="1.9" fill="none" stroke-linejoin="round"/></svg>
<div class="t " style="left:117.4px;top:292.1px;font-size:33px;color:#262626;transform:scaleX(0.9375);transform-origin:0 0;-webkit-text-stroke:0.3px #262626">OKR Dashboard</div>
<svg class="a" style="left:882px;top:276px;" width="38" height="38" viewBox="0 0 38 38" fill="none"><circle cx="18.2" cy="18.3" r="17" fill="#abd3ee"/>
<path d="M6 6.2 C9.5 14 10 22 15 27.5 L25.4 32.7 A17 17 0 0 1 6 6.2 Z" fill="#6ea4cb"/>
<circle cx="18.3" cy="27.5" r="3.6" fill="#6ea4cb"/>
<circle cx="15.1" cy="13.3" r="5.2" fill="#6ea4cb"/><circle cx="26.9" cy="11.2" r="2.8" fill="#6ea4cb"/></svg>
<svg class="a" style="left:0;top:0" width="1360" height="839" viewBox="0 0 1360 839"><path d="M926.3 305.6 V283.3 H931.8 L938.2 294.6 L944.6 283.3 H950.4 V305.6 H945.8 V292 L940 302.1 H936.4 L930.9 292 V305.6 Z" fill="#333333"/><g stroke="#333333" stroke-width="4.4" fill="none">

<circle cx="961.2" cy="297.35" r="6.6"/>
<circle cx="980.9" cy="297.35" r="6.6"/>
<path d="M994 289 V305.6 M994 297 C994 292.5 996.8 290.2 1000.2 290.2 C1003.6 290.2 1005.8 292.5 1005.8 296.5 V305.6"/>
<path d="M1023.4 292.2 A6.6 6.6 0 1 0 1023.4 302.5"/>
<circle cx="1034.3" cy="297.35" r="6.6"/>
<path d="M1042.4 289 V305.6"/>
<path d="M1050.2 289 V305.6 M1050.2 296.5 C1050.2 292.3 1052.5 290.2 1055.4 290.2 C1058.5 290.2 1060.8 292.3 1060.8 296.5 V305.6 M1060.8 296.5 C1060.8 292.3 1063 290.2 1066.1 290.2 C1069.2 290.2 1071.4 292.3 1071.4 296.5 V305.6"/>
<path d="M1079.2 289 V312"/>
<circle cx="1086.5" cy="297.35" r="6.6"/>
</g></svg>
<div class="t " style="left:907.6px;top:328.1px;font-size:11px;color:#222;letter-spacing:-0.293px;">Learn more on </div>
<div class="t " style="left:978.0px;top:328.1px;font-size:11px;color:#2f65b5;letter-spacing:-0.354px;">mooncamp.com</div>
<div class="a" style="left:978px;top:339px;width:74px;height:1px;background:#8196b8"></div>
<div class="a" style="left:72px;top:368px;width:332px;height:272px;background:#faf7f2;"></div>
<div class="a" style="left:422px;top:367px;width:334px;height:273px;border:3px solid #f4e1e9;box-sizing:border-box;background:#fff;"></div>
<div class="a" style="left:772px;top:367px;width:350px;height:273px;border:3px solid #fdf4e1;box-sizing:border-box;background:#fff;"></div>
<svg class="a" style="left:0;top:0" width="1360" height="839"><path d="M606.5 470.5 H646.5 L675 512 V636 H568 Z" fill="#fdfcf9"/><path d="M958.4 470.7 H991.7 L1016.7 511.5 V636 H897 Z" fill="#fdfcf9"/></svg>
<div class="t " style="left:93.7px;top:392.1px;font-size:13px;color:#1f1f1f;letter-spacing:-0.518px;">COMPANY </div>
<div class="a" style="left:93.7px;top:405.2px;width:68.5px;height:1px;background:#333"></div>
<div class="t " style="left:93.7px;top:421.2px;font-size:13px;color:#000;letter-spacing:-0.051px;-webkit-text-stroke:0.05px #000">Days remaining</div>
<div class="t " style="left:240.7px;top:421.2px;font-size:13px;color:#111;letter-spacing:-0.251px;">0/91</div>
<div class="t " style="left:329.0px;top:421.2px;font-size:13px;color:#111;letter-spacing:-0.440px;">00%</div>
<div class="t " style="left:93.7px;top:436.8px;font-size:13px;color:#3d3d3d;letter-spacing:-0.046px;">Time progress</div>
<div class="a" style="left:240.2px;top:437.4px;width:85px;height:12.3px;background:#c9d9f3"></div>
<div class="t " style="left:329.0px;top:436.8px;font-size:13px;color:#3d3d3d;letter-spacing:-0.312px;">100%</div>
<div class="t " style="left:93.7px;top:457.7px;font-size:13px;color:#111;letter-spacing:-0.054px;-webkit-text-stroke:0.05px #000">Overall progress</div>
<div class="a" style="left:240.2px;top:454.09999999999997px;width:50.5px;height:15.8px;background:#e8c8f1"></div>
<div class="t " style="left:329.0px;top:457.7px;font-size:13px;color:#3d3d3d;letter-spacing:-0.440px;">60%</div>
<div class="t " style="left:93.7px;top:501.7px;font-size:13px;color:#3d3d3d;letter-spacing:-0.017px;">Objectives Progress</div>
<div class="a" style="left:93.7px;top:514.3px;width:116px;height:1px;background:#8a8a8a"></div>
<div class="a" style="left:326px;top:516.0px;width:55px;height:102.2px;background:#fbf3d3"></div>
<div class="t " style="left:93.7px;top:522.0px;font-size:13px;color:#474747;letter-spacing:-0.065px;">Company Objective 1</div>
<div class="t " style="left:341.0px;top:522.0px;font-size:13px;color:#3d3d3d;letter-spacing:-0.006px;">60%</div>
<div class="t " style="left:93.7px;top:542.2px;font-size:13px;color:#474747;letter-spacing:-0.065px;">Company Objective 2</div>
<div class="t " style="left:341.0px;top:542.2px;font-size:13px;color:#3d3d3d;letter-spacing:-0.006px;">60%</div>
<div class="t " style="left:93.7px;top:562.4px;font-size:13px;color:#474747;letter-spacing:-0.065px;">Company Objective 3</div>
<div class="t " style="left:341.0px;top:562.4px;font-size:13px;color:#3d3d3d;letter-spacing:-0.006px;">60%</div>
<div class="t " style="left:93.7px;top:582.6px;font-size:13px;color:#474747;letter-spacing:-0.065px;">Company Objective 4</div>
<div class="t " style="left:341.0px;top:582.6px;font-size:13px;color:#3d3d3d;letter-spacing:-0.006px;">60%</div>
<div class="t " style="left:93.7px;top:602.8px;font-size:13px;color:#474747;letter-spacing:-0.065px;">Company Objective 5</div>
<div class="t " style="left:341.0px;top:602.8px;font-size:13px;color:#3d3d3d;letter-spacing:-0.006px;">60%</div>
<div class="t " style="left:447.5px;top:392.1px;font-size:13px;color:#1f1f1f;letter-spacing:-0.009px;">TEAM – MARKETING</div>
<div class="a" style="left:447.5px;top:405.2px;width:127.7px;height:1px;background:#333"></div>
<div class="t " style="left:447.5px;top:421.2px;font-size:13px;color:#000;letter-spacing:-0.051px;-webkit-text-stroke:0.05px #000">Days remaining</div>
<div class="t " style="left:607.4px;top:421.2px;font-size:13px;color:#111;letter-spacing:-0.251px;">0/91</div>
<div class="t " style="left:676.4px;top:421.2px;font-size:13px;color:#111;letter-spacing:-0.440px;">00%</div>
<div class="t " style="left:447.5px;top:436.8px;font-size:13px;color:#3d3d3d;letter-spacing:-0.046px;">Time progress</div>
<div class="a" style="left:606.9px;top:437.4px;width:66.5px;height:12.3px;background:#c9d9f3"></div>
<div class="t " style="left:676.4px;top:436.8px;font-size:13px;color:#3d3d3d;letter-spacing:-0.312px;">100%</div>
<div class="t " style="left:447.5px;top:457.7px;font-size:13px;color:#111;letter-spacing:-0.054px;-webkit-text-stroke:0.05px #000">Overall progress</div>
<div class="a" style="left:606.9px;top:454.09999999999997px;width:40.5px;height:15.8px;background:#e8c8f1"></div>
<div class="t " style="left:676.4px;top:457.7px;font-size:13px;color:#3d3d3d;letter-spacing:-0.440px;">60%</div>
<div class="t " style="left:447.5px;top:501.7px;font-size:13px;color:#3d3d3d;letter-spacing:-0.017px;">Objectives Progress</div>
<div class="a" style="left:447.5px;top:514.3px;width:116px;height:1px;background:#8a8a8a"></div>
<div class="a" style="left:674.2px;top:516.0px;width:59.39999999999998px;height:102.2px;background:#fbf3d3"></div>
<div class="t " style="left:447.5px;top:522.0px;font-size:13px;color:#474747;letter-spacing:-0.060px;">Marketing Objective 1</div>
<div class="t " style="left:691.4px;top:522.0px;font-size:13px;color:#3d3d3d;letter-spacing:-0.006px;">60%</div>
<div class="t " style="left:447.5px;top:542.2px;font-size:13px;color:#474747;letter-spacing:-0.060px;">Marketing Objective 2</div>
<div class="t " style="left:691.4px;top:542.2px;font-size:13px;color:#3d3d3d;letter-spacing:-0.006px;">60%</div>
<div class="t " style="left:447.5px;top:562.4px;font-size:13px;color:#474747;letter-spacing:-0.060px;">Marketing Objective 3</div>
<div class="t " style="left:691.4px;top:562.4px;font-size:13px;color:#3d3d3d;letter-spacing:-0.006px;">60%</div>
<div class="t " style="left:447.5px;top:582.6px;font-size:13px;color:#474747;letter-spacing:-0.060px;">Marketing Objective 4</div>
<div class="t " style="left:691.4px;top:582.6px;font-size:13px;color:#3d3d3d;letter-spacing:-0.006px;">60%</div>
<div class="t " style="left:447.5px;top:602.8px;font-size:13px;color:#474747;letter-spacing:-0.060px;">Marketing Objective 5</div>
<div class="t " style="left:691.4px;top:602.8px;font-size:13px;color:#3d3d3d;letter-spacing:-0.006px;">60%</div>
<div class="t " style="left:798.6px;top:392.1px;font-size:13px;color:#1f1f1f;letter-spacing:-0.040px;">TEAM – SALES</div>
<div class="a" style="left:798.6px;top:405.2px;width:92px;height:1px;background:#333"></div>
<div class="t " style="left:798.6px;top:421.2px;font-size:13px;color:#000;letter-spacing:-0.051px;-webkit-text-stroke:0.05px #000">Days remaining</div>
<div class="t " style="left:959.5px;top:421.2px;font-size:13px;color:#111;letter-spacing:-0.251px;">0/91</div>
<div class="t " style="left:1019.2px;top:421.2px;font-size:13px;color:#111;letter-spacing:-0.440px;">00%</div>
<div class="t " style="left:798.6px;top:436.8px;font-size:13px;color:#3d3d3d;letter-spacing:-0.046px;">Time progress</div>
<div class="a" style="left:959.0px;top:437.4px;width:57.5px;height:12.3px;background:#c9d9f3"></div>
<div class="t " style="left:1019.2px;top:436.8px;font-size:13px;color:#3d3d3d;letter-spacing:-0.312px;">100%</div>
<div class="t " style="left:798.6px;top:457.7px;font-size:13px;color:#111;letter-spacing:-0.054px;-webkit-text-stroke:0.05px #000">Overall progress</div>
<div class="a" style="left:959.0px;top:454.09999999999997px;width:34px;height:15.8px;background:#e8c8f1"></div>
<div class="t " style="left:1019.2px;top:457.7px;font-size:13px;color:#3d3d3d;letter-spacing:-0.440px;">60%</div>
<div class="t " style="left:798.6px;top:501.7px;font-size:13px;color:#3d3d3d;letter-spacing:-0.017px;">Objectives Progress</div>
<div class="a" style="left:798.6px;top:514.3px;width:116px;height:1px;background:#8a8a8a"></div>
<div class="a" style="left:1016.7px;top:516.0px;width:59.299999999999955px;height:102.2px;background:#fbf3d3"></div>
<div class="t " style="left:798.6px;top:522.0px;font-size:13px;color:#474747;letter-spacing:-0.060px;">Sales Objective 1</div>
<div class="t " style="left:1033.5px;top:522.0px;font-size:13px;color:#3d3d3d;letter-spacing:-0.006px;">60%</div>
<div class="t " style="left:798.6px;top:542.2px;font-size:13px;color:#474747;letter-spacing:-0.060px;">Sales Objective 2</div>
<div class="t " style="left:1033.5px;top:542.2px;font-size:13px;color:#3d3d3d;letter-spacing:-0.006px;">60%</div>
<div class="t " style="left:798.6px;top:562.4px;font-size:13px;color:#474747;letter-spacing:-0.060px;">Sales Objective 3</div>
<div class="t " style="left:1033.5px;top:562.4px;font-size:13px;color:#3d3d3d;letter-spacing:-0.006px;">60%</div>
<div class="t " style="left:798.6px;top:582.6px;font-size:13px;color:#474747;letter-spacing:-0.060px;">Sales Objective 4</div>
<div class="t " style="left:1033.5px;top:582.6px;font-size:13px;color:#3d3d3d;letter-spacing:-0.006px;">60%</div>
<div class="t " style="left:798.6px;top:602.8px;font-size:13px;color:#474747;letter-spacing:-0.060px;">Sales Objective 5</div>
<div class="t " style="left:1033.5px;top:602.8px;font-size:13px;color:#3d3d3d;letter-spacing:-0.006px;">60%</div>
<div class="a" style="left:71px;top:659px;width:334px;height:200px;border:3px solid #c6dfcd;box-sizing:border-box;background:#fff;"></div>
<div class="a" style="left:421px;top:659px;width:335px;height:200px;border:3px solid #c8c8c8;box-sizing:border-box;background:#fff;"></div>
<div class="a" style="left:772px;top:659px;width:350px;height:200px;border:3px solid #c8c8c8;box-sizing:border-box;background:#fff;"></div>
<svg class="a" style="left:0;top:0" width="1360" height="839"><path d="M606.5 765 H646 L672 803 H597.7 Z" fill="#fdfcf9"/><path d="M958.5 765 H992.5 L1018.3 803 H949.7 Z" fill="#fdfcf9"/></svg>
<div class="t " style="left:93.7px;top:682.2px;font-size:13px;color:#1f1f1f;letter-spacing:-0.049px;">TEAM – ENGINEERING</div>
<div class="a" style="left:93.7px;top:695.2px;width:140.7px;height:1px;background:#333"></div>
<div class="t " style="left:93.7px;top:711.3px;font-size:13px;color:#000;letter-spacing:-0.051px;-webkit-text-stroke:0.05px #000">Days remaining</div>
<div class="t " style="left:240.5px;top:711.3px;font-size:13px;color:#111;letter-spacing:-0.251px;">0/91</div>
<div class="t " style="left:328.5px;top:711.3px;font-size:13px;color:#111;letter-spacing:-0.440px;">00%</div>
<div class="t " style="left:93.7px;top:731.8px;font-size:13px;color:#3d3d3d;letter-spacing:-0.046px;">Time progress</div>
<div class="a" style="left:240.0px;top:727.8000000000001px;width:85.5px;height:16.5px;background:#c9d9f3"></div>
<div class="t " style="left:328.5px;top:731.8px;font-size:13px;color:#3d3d3d;letter-spacing:-0.312px;">100%</div>
<div class="t " style="left:93.7px;top:752.3px;font-size:13px;color:#111;letter-spacing:-0.054px;-webkit-text-stroke:0.05px #000">Overall progress</div>
<div class="a" style="left:240.0px;top:747.7px;width:51px;height:17.2px;background:#e8c8f1"></div>
<div class="t " style="left:328.5px;top:752.3px;font-size:13px;color:#3d3d3d;letter-spacing:-0.440px;">60%</div>
<div class="t " style="left:93.7px;top:794.5px;font-size:13px;color:#3d3d3d;letter-spacing:-0.017px;">Objectives Progress</div>
<div class="a" style="left:93.7px;top:807.0px;width:116px;height:1px;background:#8a8a8a"></div>
<div class="t " style="left:447.5px;top:682.2px;font-size:13px;color:#1f1f1f;letter-spacing:-0.045px;">TEAM – FINANCE</div>
<div class="a" style="left:447.5px;top:695.2px;width:107px;height:1px;background:#333"></div>
<div class="t " style="left:447.5px;top:711.3px;font-size:13px;color:#000;letter-spacing:-0.051px;-webkit-text-stroke:0.05px #000">Days remaining</div>
<div class="t " style="left:607.5px;top:711.3px;font-size:13px;color:#111;letter-spacing:-0.251px;">0/91</div>
<div class="t " style="left:676.5px;top:711.3px;font-size:13px;color:#111;letter-spacing:-0.440px;">00%</div>
<div class="t " style="left:447.5px;top:731.8px;font-size:13px;color:#3d3d3d;letter-spacing:-0.046px;">Time progress</div>
<div class="a" style="left:607.0px;top:727.8000000000001px;width:66.5px;height:16.5px;background:#c9d9f3"></div>
<div class="t " style="left:676.5px;top:731.8px;font-size:13px;color:#3d3d3d;letter-spacing:-0.312px;">100%</div>
<div class="t " style="left:447.5px;top:752.3px;font-size:13px;color:#111;letter-spacing:-0.054px;-webkit-text-stroke:0.05px #000">Overall progress</div>
<div class="a" style="left:607.0px;top:747.7px;width:40px;height:17.2px;background:#e8c8f1"></div>
<div class="t " style="left:676.5px;top:752.3px;font-size:13px;color:#3d3d3d;letter-spacing:-0.440px;">60%</div>
<div class="t " style="left:447.5px;top:794.5px;font-size:13px;color:#3d3d3d;letter-spacing:-0.017px;">Objectives Progress</div>
<div class="a" style="left:447.5px;top:807.0px;width:116px;height:1px;background:#8a8a8a"></div>
<div class="t " style="left:798.5px;top:682.2px;font-size:13px;color:#1f1f1f;letter-spacing:-0.030px;">TEAM – X</div>
<div class="a" style="left:798.5px;top:695.2px;width:59px;height:1px;background:#333"></div>
<div class="t " style="left:798.5px;top:711.3px;font-size:13px;color:#000;letter-spacing:-0.051px;-webkit-text-stroke:0.05px #000">Days remaining</div>
<div class="t " style="left:959.0px;top:711.3px;font-size:13px;color:#111;letter-spacing:-0.251px;">0/91</div>
<div class="t " style="left:1019.0px;top:711.3px;font-size:13px;color:#111;letter-spacing:-0.440px;">00%</div>
<div class="t " style="left:798.5px;top:731.8px;font-size:13px;color:#3d3d3d;letter-spacing:-0.046px;">Time progress</div>
<div class="a" style="left:958.5px;top:727.8000000000001px;width:57px;height:16.5px;background:#c9d9f3"></div>
<div class="t " style="left:1019.0px;top:731.8px;font-size:13px;color:#3d3d3d;letter-spacing:-0.312px;">100%</div>
<div class="t " style="left:798.5px;top:752.3px;font-size:13px;color:#111;letter-spacing:-0.054px;-webkit-text-stroke:0.05px #000">Overall progress</div>
<div class="a" style="left:958.5px;top:747.7px;width:34px;height:17.2px;background:#e8c8f1"></div>
<div class="t " style="left:1019.0px;top:752.3px;font-size:13px;color:#3d3d3d;letter-spacing:-0.440px;">60%</div>
<div class="t " style="left:798.5px;top:794.5px;font-size:13px;color:#3d3d3d;letter-spacing:-0.017px;">Objectives Progress</div>
<div class="a" style="left:798.5px;top:807.0px;width:116px;height:1px;background:#8a8a8a"></div>
<div class="a" style="left:0px;top:803px;width:1360px;height:36px;background:#f4f4f3"></div>
<svg class="a" style="left:11px;top:814px;" width="12" height="16" viewBox="0 0 12 16" fill="none"><path d="M8.3 2 L3.5 7 L8.3 12" stroke="#b3b1af" stroke-width="1.1" fill="none"/></svg>
<svg class="a" style="left:46px;top:814px;" width="12" height="16" viewBox="0 0 12 16" fill="none"><path d="M3.7 2 L8.5 7 L3.7 12" stroke="#444" stroke-width="1.2" fill="none"/></svg>
<svg class="a" style="left:79px;top:814px;" width="16" height="14" viewBox="0 0 16 14" fill="none"><path d="M1 2.5 H14.5 M1 7 H14.5 M1 11.5 H14.5" stroke="#444" stroke-width="1.3"/></svg>
<div class="t " style="left:115.8px;top:812.5px;font-size:15.6px;color:#484644;letter-spacing:-0.175px;">Getting started</div>
<div class="t " style="left:238.3px;top:812.5px;font-size:15.6px;color:#323130;letter-spacing:-0.369px;-webkit-text-stroke:0.5px #323130">Dashboard</div>
<div class="a" style="left:238px;top:835px;width:74.5px;height:4px;background:#3b7a47"></div>
<div class="t " style="left:333.0px;top:812.5px;font-size:15.6px;color:#484644;letter-spacing:-0.692px;">Check-Ins</div>
<div class="t " style="left:420.0px;top:812.5px;font-size:15.6px;color:#484644;letter-spacing:-0.424px;">Company Objectives</div>
<div class="t " style="left:581.2px;top:812.5px;font-size:15.6px;color:#484644;letter-spacing:-0.320px;">Team – Marketing Objectives</div>
<div class="a" style="left:800px;top:806px;width:208px;height:30px;overflow:hidden">
<div class="t " style="left:0.0px;top:6.5px;font-size:15.6px;color:#484644;letter-spacing:-0.727px;">EXAMPLE | Company Objectives</div>
</div>
<div class="a" style="left:1001px;top:806px;width:8px;height:30px;background:linear-gradient(90deg,rgba(244,244,243,0),#f4f4f3 60%,#dddbd9)"></div>
<svg class="a" style="left:1017px;top:813px;" width="16" height="16" viewBox="0 0 16 16" fill="none"><path d="M8.5 3 V13.5 M3 8.25 H14" stroke="#444" stroke-width="1.1"/></svg>
</body></html>
